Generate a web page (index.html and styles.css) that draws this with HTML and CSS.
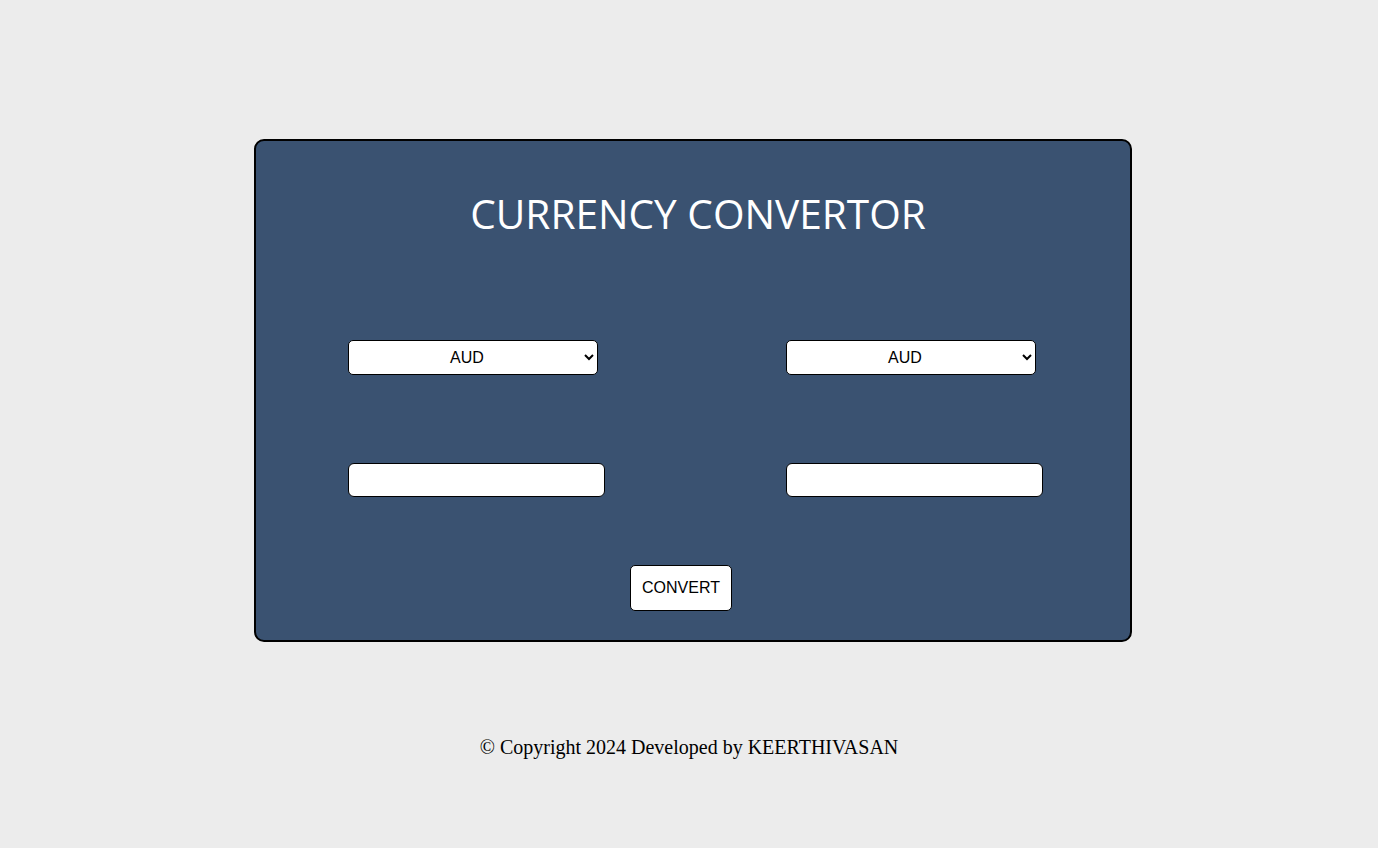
FILE: index.html
```html
<!DOCTYPE html>
<html>
<head>
<meta charset="utf-8">
<link rel="stylesheet" href="styles.css">
</head>
<body>
<main class="page">
  <section class="card">
    <h1 class="title">CURRENCY CONVERTOR</h1>
    <div class="grid">
      <div class="cell">
        <select class="sel"><option>AUD</option><option>USD</option><option>INR</option></select>
      </div>
      <div class="cell">
        <select class="sel"><option>AUD</option><option>USD</option><option>INR</option></select>
      </div>
      <div class="cell cell-input">
        <input class="field" type="text">
      </div>
      <div class="cell cell-input">
        <input class="field" type="text">
      </div>
    </div>
    <div class="actions">
      <button class="btn">CONVERT</button>
    </div>
  </section>
  <footer class="footer">© Copyright 2024 Developed by KEERTHIVASAN</footer>
</main>
</body>
</html>
```
FILE: styles.css
```css
html, body {
  margin: 0;
  padding: 0;
  background: #ececec;
}
.page {
  display: flex;
  flex-direction: column;
  align-items: center;
  padding-top: 139px;
}
.card {
  box-sizing: border-box;
  width: 878px;
  height: 503px;
  margin-left: 8px;
  background: #3a5271;
  border: 2px solid #000;
  border-radius: 10px;
  display: flex;
  flex-direction: column;
}
.title {
  margin: 0;
  padding-top: 51px;
  padding-left: 10px;
  text-align: center;
  color: #fff;
  font-family: "Open Sans", sans-serif;
  font-weight: 400;
  font-size: 40.6px;
  line-height: 44px;
}
.grid {
  display: grid;
  grid-template-columns: 438px 436px;
  margin-top: 104px;
  row-gap: 88px;
}
.cell {
  padding-left: 92px;
}
.sel {
  box-sizing: border-box;
  width: 250px;
  height: 35px;
  background: #fff;
  border: 1px solid #000;
  border-radius: 5px;
  font-family: "Liberation Sans", sans-serif;
  font-size: 16px;
  text-align: center;
  text-align-last: center;
  color: #000;
}
.field {
  box-sizing: border-box;
  width: 257px;
  height: 34px;
  background: #fff;
  border: 1px solid #000;
  border-radius: 6px;
  padding: 0 6px;
}
.actions {
  padding-left: 374px;
  margin-top: 68px;
}
.btn {
  box-sizing: border-box;
  width: 102px;
  height: 46px;
  background: #fff;
  border: 1px solid #000;
  border-radius: 5px;
  font-family: "Liberation Sans", sans-serif;
  font-size: 16px;
  color: #000;
  padding: 0;
}
.footer {
  margin-top: 94px;
  font-family: "Liberation Serif", serif;
  font-size: 20px;
  color: #000;
}
```
